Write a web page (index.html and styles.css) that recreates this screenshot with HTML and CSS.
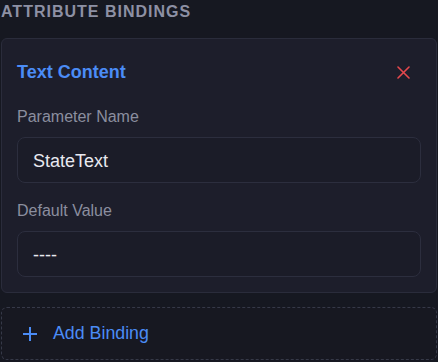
FILE: index.html
```html
<!DOCTYPE html>
<html lang="en">
<head>
  <meta charset="UTF-8" />
  <meta name="viewport" content="width=device-width, initial-scale=1.0"/>
  <title>Attribute Bindings</title>
  <link rel="stylesheet" href="styles.css">
</head>
<body>

<section class="bindings">
  <h3 class="section-title">Attribute Bindings</h3>

  <div class="binding-card">
    <div class="card-head">
      <span class="card-title">Text Content</span>
      <button type="button" class="remove-btn" title="Remove binding">
        <svg width="13" height="13" viewBox="0 0 13 13" fill="none" stroke="currentColor" stroke-width="1.6" stroke-linecap="round">
          <path d="M1 1L12 12M12 1L1 12"/>
        </svg>
      </button>
    </div>

    <div class="field">
      <label for="paramName">Parameter Name</label>
      <input type="text" id="paramName" value="StateText" />
    </div>

    <div class="field">
      <label for="defaultValue">Default Value</label>
      <input type="text" id="defaultValue" value="----" />
    </div>
  </div>

  <button type="button" class="add-btn">
    <svg width="14" height="14" viewBox="0 0 14 14" fill="none" stroke="currentColor" stroke-width="2">
      <path d="M7 0V14M0 7H14"/>
    </svg>
    <span>Add Binding</span>
  </button>
</section>

</body>
</html>
```

FILE: styles.css
```css
body {
  margin: 0; padding: 0 1px; background: #161821;
  font-family: "Liberation Sans", Arial, sans-serif; color: #e6e7ee;
}
.section-title {
  margin: 0 0 14px; font-size: 16px; line-height: 24px; font-weight: bold;
  text-transform: uppercase; letter-spacing: 1px; color: #8d90a4;
}
.binding-card {
  background: #1d1e2b; border: 1px solid #2a2c3b; border-radius: 6px;
  padding: 20px 15px 15px;
}
.card-head {
  display: flex; align-items: center; justify-content: space-between;
  height: 26px; margin-bottom: 22px;
}
.card-title { font-size: 18px; font-weight: bold; color: #4b8cf6; }
.remove-btn {
  display: flex; align-items: center; justify-content: center;
  width: 21px; height: 21px; padding: 0; margin-right: 7px;
  background: none; border: none; color: #e5484d; cursor: pointer;
}
.field + .field { margin-top: 18px; }
.field label {
  display: block; font-size: 16px; line-height: 20px; color: #8b8e9f;
  margin-bottom: 10px;
}
.field input {
  display: block; width: 100%; height: 46px; box-sizing: border-box;
  padding: 2px 15px 0; background: #1b1c28; border: 1px solid #2c2e3e;
  border-radius: 8px; color: #e8e9f0; font-family: inherit; font-size: 18px;
  outline: none;
}
.add-btn {
  display: flex; align-items: center; gap: 16px; width: 100%; height: 53px;
  box-sizing: border-box; margin-top: 14px; padding: 0 21px;
  background: #171821; border: 1px dashed #363948; border-radius: 6px;
  color: #4b8cf6; font-family: inherit; font-size: 17.8px; cursor: pointer;
}
```
